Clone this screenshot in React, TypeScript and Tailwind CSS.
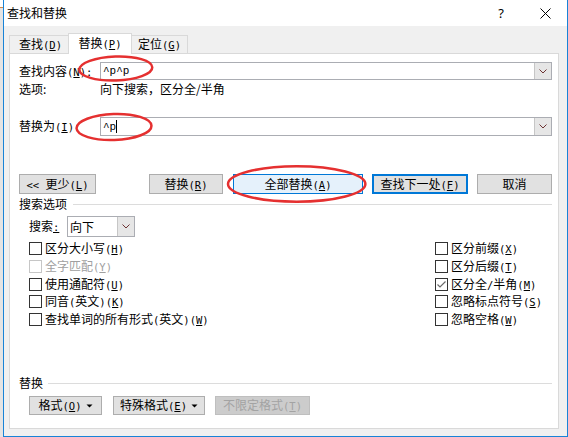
import React from 'react';

function Lbl({ t }: { t: string }) {
  const out: React.ReactNode[] = [];
  const re = /([\x00-\x7f]+)|([^\x00-\x7f]+)/g;
  let k = 0;
  for (const m of t.matchAll(re)) {
    if (m[1]) {
      const s = m[1];
      const i = s.indexOf('&');
      out.push(
        <span key={k++} className="font-['DejaVu_Sans_Mono',monospace] text-[10.5px] whitespace-pre">
          {i >= 0 ? (
            <>
              {s.slice(0, i)}
              <span className="underline underline-offset-1">{s[i + 1]}</span>
              {s.slice(i + 2)}
            </>
          ) : (
            s
          )}
        </span>
      );
    } else {
      out.push(<span key={k++}>{m[2]}</span>);
    }
  }
  return <span className="whitespace-nowrap">{out}</span>;
}

function Chev() {
  return (
    <svg width="8" height="5" viewBox="0 0 8 5">
      <polyline points="0.5,0.5 4,4 7.5,0.5" fill="none" stroke="#6e3434" strokeWidth="1" />
    </svg>
  );
}

function Combo({ children }: { children: React.ReactNode }) {
  return (
    <div className="flex-1 h-full flex border border-[#abadb3] bg-white">
      <div className="flex-1 flex items-center pl-[2px]">{children}</div>
      <div className="w-[17px] h-full bg-[#e6e6e6] border-l border-[#c6c6c6] flex items-center justify-center">
        <Chev />
      </div>
    </div>
  );
}

function Cb({ t, checked, disabled }: { t: string; checked?: boolean; disabled?: boolean }) {
  return (
    <div className="h-[17.7px] flex items-center">
      <div
        className={
          disabled
            ? 'w-[13px] h-[13px] border border-[#c6c6c6] bg-white'
            : 'w-[13px] h-[13px] border border-[#333333] bg-white flex items-center justify-center'
        }
      >
        {checked && (
          <svg width="11" height="11" viewBox="0 0 11 11">
            <polyline points="1.5,5.5 4,8 9.5,2.5" fill="none" stroke="#6a6a6a" strokeWidth="1.2" />
          </svg>
        )}
      </div>
      <span className={disabled ? 'ml-[3px] leading-[14px] whitespace-nowrap text-[#a0a0a0]' : 'ml-[3px] leading-[14px] whitespace-nowrap'}>
        <Lbl t={t} />
      </span>
    </div>
  );
}

function Tri() {
  return (
    <svg width="7" height="4" viewBox="0 0 7 4" className="ml-[4px]">
      <polygon points="0.5,0.5 6.5,0.5 3.5,3.5" fill="#000" />
    </svg>
  );
}

export default function App() {
  return (
    <div className="relative w-[568px] h-[437px] flex overflow-hidden bg-[#f0f0f0] font-['Noto_Sans_CJK_SC',sans-serif] text-[12px] text-black leading-[14px]">
      <div className="w-[3px] flex flex-col">
        <div className="h-[7px] bg-white" />
        <div className="h-px bg-[#d28b4a]" />
        <div className="flex-1 bg-[#e4e4e4]" />
      </div>
      <div className="flex-1 flex flex-col border-l border-r border-b border-[#1883d7]">
        {/* title bar */}
        <div className="h-[26px] bg-white flex items-center pl-[3px]">
          <span className="flex-1">查找和替换</span>
          <div className="w-[44px] h-full flex items-center justify-center text-[13px] font-['Noto_Sans',sans-serif]">?</div>
          <div className="w-[44px] h-full flex items-center justify-center">
            <svg width="11" height="11" viewBox="0 0 11 11">
              <path d="M0.5 0.5 L10.5 10.5 M10.5 0.5 L0.5 10.5" stroke="#000" strokeWidth="1" fill="none" />
            </svg>
          </div>
        </div>
        {/* body */}
        <div className="flex-1 flex flex-col pt-[7px] pl-[5px] pr-[8px] pb-[7px]">
          <div className="flex h-[20px] items-end relative z-10">
            <div className="w-[60px] h-[18px] border-t border-l border-r border-[#d9d9d9] bg-[#f0f0f0] flex items-center justify-center pl-[3px]">
              <Lbl t="查找(&D)" />
            </div>
            <div className="relative z-10 -ml-px w-[64px] h-[21px] -mb-px border-t border-l border-r border-[#d9d9d9] bg-white flex items-center justify-center pb-[1px]">
              <Lbl t="替换(&P)" />
            </div>
            <div className="-ml-px w-[57px] h-[18px] border-t border-l border-r border-[#d9d9d9] bg-[#f0f0f0] flex items-center justify-center">
              <Lbl t="定位(&G)" />
            </div>
          </div>
          {/* panel */}
          <div className="flex-1 bg-white border border-[#d9d9d9] flex flex-col pl-[9px] pr-[6px] pt-[8px] pb-[13px]">
            <div className="flex h-[18px] items-center">
              <div className="w-[81px] whitespace-nowrap">
                <Lbl t="查找内容(&N):" />
              </div>
              <Combo>
                <span className="font-['Liberation_Mono',monospace] text-[11px]">^p^p</span>
              </Combo>
            </div>
            <div className="flex h-[18px] items-center">
              <div className="w-[81px]">选项:</div>
              <div>向下搜索，区分全/半角</div>
            </div>
            <div className="flex h-[19px] items-center mt-[19px]">
              <div className="w-[81px] whitespace-nowrap">
                <Lbl t="替换为(&I):" />
              </div>
              <Combo>
                <span className="font-['Liberation_Mono',monospace] text-[11px]">^p</span>
                <span className="w-px h-[13px] bg-black" />
              </Combo>
            </div>
            {/* buttons */}
            <div className="flex h-[20px] mt-[38px]">
              <div className="w-[77px] h-full bg-[#e1e1e1] border border-[#adadad] flex items-center justify-center">
                <Lbl t="<< 更少(&L)" />
              </div>
              <div className="ml-[53px] w-[74px] h-full bg-[#e1e1e1] border border-[#adadad] flex items-center justify-center">
                <Lbl t="替换(&R)" />
              </div>
              <div className="ml-[10px] w-[130px] h-full bg-[#e5f1fb] border border-[#0078d7] flex items-center justify-center">
                <Lbl t="全部替换(&A)" />
              </div>
              <div className="ml-[9px] w-[96px] h-full bg-[#e1e1e1] border-2 border-[#0078d7] flex items-center justify-center">
                <Lbl t="查找下一处(&F)" />
              </div>
              <div className="ml-[9px] w-[75px] h-full bg-[#e1e1e1] border border-[#adadad] flex items-center justify-center">
                取消
              </div>
            </div>
            <div className="flex h-[20px] items-center">
              <span>搜索选项</span>
              <div className="flex-1 h-px bg-[#dcdcdc] ml-[6px]" />
            </div>
            <div className="flex h-[21px] items-center mt-[2px] pl-[10px]">
              <div className="w-[38px] whitespace-nowrap">
                搜索<span className="underline underline-offset-1 font-['DejaVu_Sans_Mono',monospace] text-[10.5px]">:</span>
              </div>
              <div className="w-[68px] h-full flex border border-[#abadb3] bg-white">
                <div className="flex-1 flex items-center pl-[2px]">向下</div>
                <div className="w-[17px] h-full bg-[#e6e6e6] border-l border-[#c6c6c6] flex items-center justify-center">
                  <Chev />
                </div>
              </div>
            </div>
            <div className="flex mt-[3px]">
              <div className="flex-1 flex flex-col pl-[10px]">
                <Cb t="区分大小写(&H)" />
                <Cb t="全字匹配(&Y)" disabled />
                <Cb t="使用通配符(&U)" />
                <Cb t="同音(英文)(&K)" />
                <Cb t="查找单词的所有形式(英文)(&W)" />
              </div>
              <div className="w-[117px] flex flex-col">
                <Cb t="区分前缀(&X)" />
                <Cb t="区分后缀(&T)" />
                <Cb t="区分全/半角(&M)" checked />
                <Cb t="忽略标点符号(&S)" />
                <Cb t="忽略空格(&W)" />
              </div>
            </div>
            <div className="flex-1" />
            <div className="flex h-[20px] items-center">
              <span>替换</span>
              <div className="flex-1 h-px bg-[#dcdcdc] ml-[5px]" />
            </div>
            <div className="flex h-[19px] mt-[3px] pl-[10px]">
              <div className="w-[73px] h-full bg-[#e1e1e1] border border-[#adadad] flex items-center justify-center">
                <Lbl t="格式(&O)" />
                <Tri />
              </div>
              <div className="ml-[11px] w-[92px] h-full bg-[#e1e1e1] border border-[#adadad] flex items-center justify-center">
                <Lbl t="特殊格式(&E)" />
                <Tri />
              </div>
              <div className="ml-[10px] w-[95px] h-full bg-[#cccccc] border border-[#bfbfbf] flex items-center justify-center text-[#a3a3a3]">
                <Lbl t="不限定格式(&T)" />
              </div>
            </div>
          </div>
        </div>
      </div>
      {/* annotations */}
      <svg className="absolute left-0 top-0 pointer-events-none" width="568" height="437" viewBox="0 0 568 437">
        <ellipse cx="115.8" cy="68.5" rx="36.5" ry="12" fill="none" stroke="#e53030" strokeWidth="2.5" transform="rotate(-2 115.8 68.5)" />
        <ellipse cx="114" cy="127" rx="37.5" ry="13" fill="none" stroke="#e53030" strokeWidth="2.5" transform="rotate(-2 114 127)" />
        <ellipse cx="296.7" cy="184" rx="68.7" ry="17.7" fill="none" stroke="#e53030" strokeWidth="2.5" />
      </svg>
    </div>
  );
}
